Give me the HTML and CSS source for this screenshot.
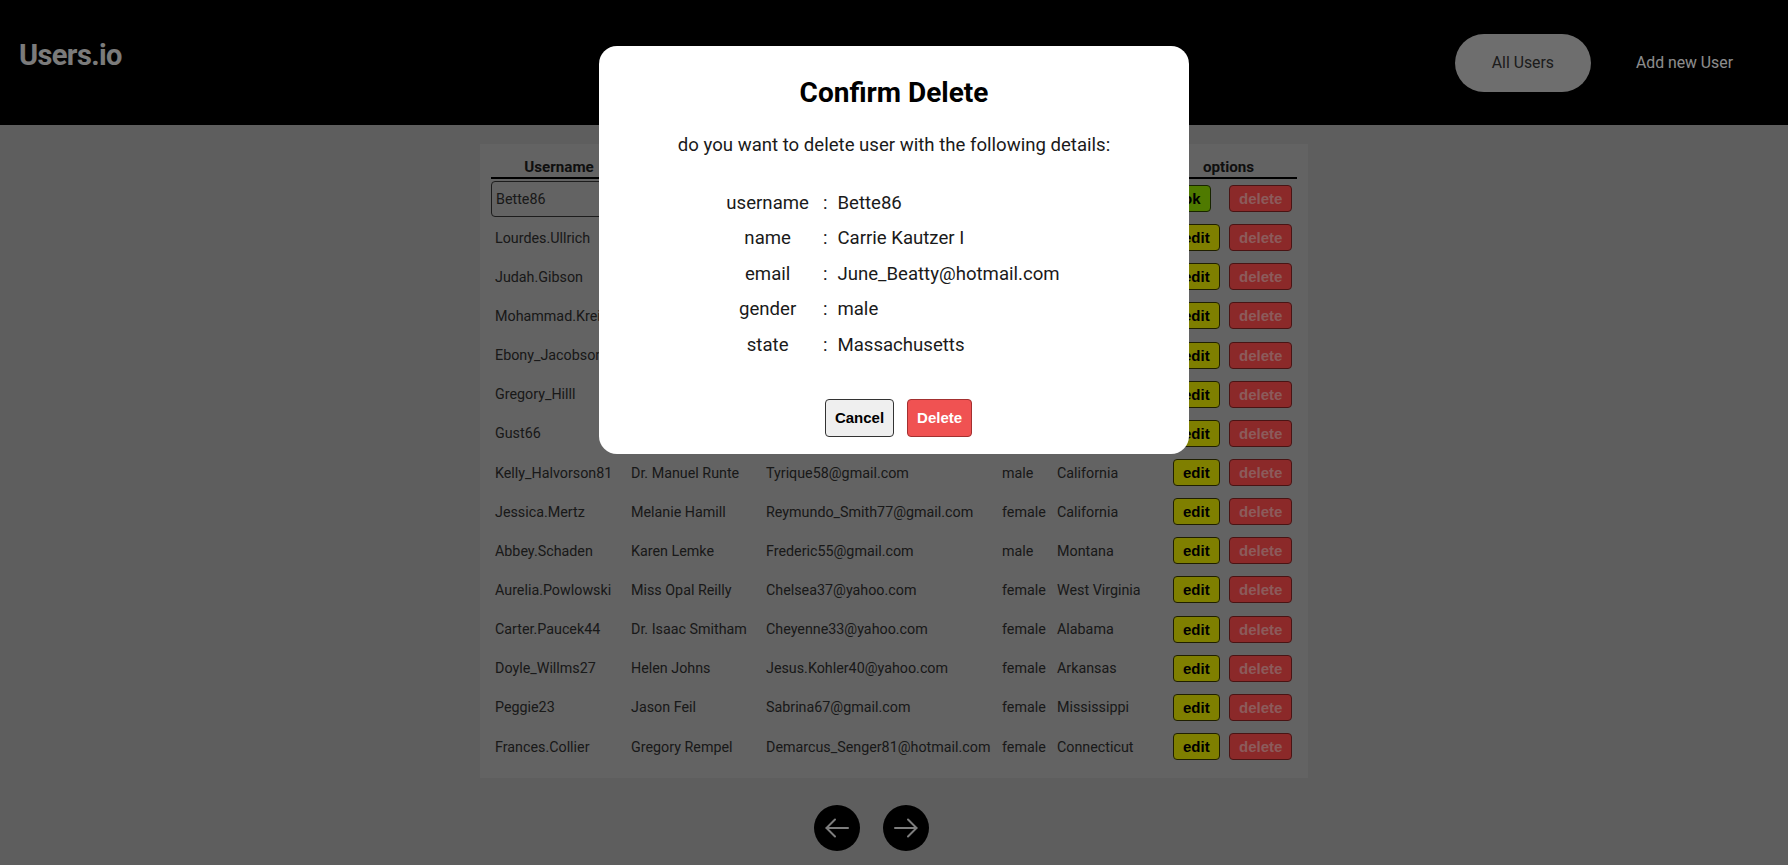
FILE: index.html
```html
<!DOCTYPE html>
<html lang="en">
<head>
<meta charset="utf-8">
<title>Users.io</title>
<link rel="stylesheet" href="styles.css">
</head>
<body>
<header class="topbar">
  <div class="logo">Users.io</div>
  <nav class="nav">
    <a class="nav-link active" href="#">All Users</a>
    <a class="nav-link" href="#">Add new User</a>
  </nav>
</header>

<main class="main">
  <section class="card">
    <div class="users">
      <div class="row head">
        <div class="th">Username</div>
        <div class="th"></div>
        <div class="th"></div>
        <div class="th"></div>
        <div class="th"></div>
        <div class="th th-opt">options</div>
      </div>

      <div class="row editing">
        <div class="cell cell-input"><input class="field" value="Bette86"></div>
        <div class="cell cell-input"><input class="field"></div>
        <div class="cell cell-input"><input class="field"></div>
        <div class="cell cell-input"><input class="field"></div>
        <div class="cell cell-input"><input class="field"></div>
        <div class="cell opts"><button class="btn btn-ok">ok</button><button class="btn btn-del">delete</button></div>
      </div>

      <div class="row"><div class="cell">Lourdes.Ullrich</div><div class="cell"></div><div class="cell"></div><div class="cell"></div><div class="cell"></div><div class="cell opts"><button class="btn btn-edit">edit</button><button class="btn btn-del">delete</button></div></div>
      <div class="row"><div class="cell">Judah.Gibson</div><div class="cell"></div><div class="cell"></div><div class="cell"></div><div class="cell"></div><div class="cell opts"><button class="btn btn-edit">edit</button><button class="btn btn-del">delete</button></div></div>
      <div class="row"><div class="cell">Mohammad.Kreiger</div><div class="cell"></div><div class="cell"></div><div class="cell"></div><div class="cell"></div><div class="cell opts"><button class="btn btn-edit">edit</button><button class="btn btn-del">delete</button></div></div>
      <div class="row"><div class="cell">Ebony_Jacobson</div><div class="cell"></div><div class="cell"></div><div class="cell"></div><div class="cell"></div><div class="cell opts"><button class="btn btn-edit">edit</button><button class="btn btn-del">delete</button></div></div>
      <div class="row"><div class="cell">Gregory_Hilll</div><div class="cell"></div><div class="cell"></div><div class="cell"></div><div class="cell"></div><div class="cell opts"><button class="btn btn-edit">edit</button><button class="btn btn-del">delete</button></div></div>
      <div class="row"><div class="cell">Gust66</div><div class="cell"></div><div class="cell"></div><div class="cell"></div><div class="cell"></div><div class="cell opts"><button class="btn btn-edit">edit</button><button class="btn btn-del">delete</button></div></div>
      <div class="row"><div class="cell">Kelly_Halvorson81</div><div class="cell">Dr. Manuel Runte</div><div class="cell">Tyrique58@gmail.com</div><div class="cell">male</div><div class="cell">California</div><div class="cell opts"><button class="btn btn-edit">edit</button><button class="btn btn-del">delete</button></div></div>
      <div class="row"><div class="cell">Jessica.Mertz</div><div class="cell">Melanie Hamill</div><div class="cell">Reymundo_Smith77@gmail.com</div><div class="cell">female</div><div class="cell">California</div><div class="cell opts"><button class="btn btn-edit">edit</button><button class="btn btn-del">delete</button></div></div>
      <div class="row"><div class="cell">Abbey.Schaden</div><div class="cell">Karen Lemke</div><div class="cell">Frederic55@gmail.com</div><div class="cell">male</div><div class="cell">Montana</div><div class="cell opts"><button class="btn btn-edit">edit</button><button class="btn btn-del">delete</button></div></div>
      <div class="row"><div class="cell">Aurelia.Powlowski</div><div class="cell">Miss Opal Reilly</div><div class="cell">Chelsea37@yahoo.com</div><div class="cell">female</div><div class="cell">West Virginia</div><div class="cell opts"><button class="btn btn-edit">edit</button><button class="btn btn-del">delete</button></div></div>
      <div class="row"><div class="cell">Carter.Paucek44</div><div class="cell">Dr. Isaac Smitham</div><div class="cell">Cheyenne33@yahoo.com</div><div class="cell">female</div><div class="cell">Alabama</div><div class="cell opts"><button class="btn btn-edit">edit</button><button class="btn btn-del">delete</button></div></div>
      <div class="row"><div class="cell">Doyle_Willms27</div><div class="cell">Helen Johns</div><div class="cell">Jesus.Kohler40@yahoo.com</div><div class="cell">female</div><div class="cell">Arkansas</div><div class="cell opts"><button class="btn btn-edit">edit</button><button class="btn btn-del">delete</button></div></div>
      <div class="row"><div class="cell">Peggie23</div><div class="cell">Jason Feil</div><div class="cell">Sabrina67@gmail.com</div><div class="cell">female</div><div class="cell">Mississippi</div><div class="cell opts"><button class="btn btn-edit">edit</button><button class="btn btn-del">delete</button></div></div>
      <div class="row"><div class="cell">Frances.Collier</div><div class="cell">Gregory Rempel</div><div class="cell">Demarcus_Senger81@hotmail.com</div><div class="cell">female</div><div class="cell">Connecticut</div><div class="cell opts"><button class="btn btn-edit">edit</button><button class="btn btn-del">delete</button></div></div>
    </div>
  </section>

  <div class="pager">
    <button class="pg" aria-label="previous page">
      <svg width="24" height="20" viewBox="0 0 24 20" fill="none" stroke="currentColor" stroke-width="2" stroke-linecap="round" stroke-linejoin="round"><path d="M23 10H1.5"/><path d="M10 1.5L1.5 10L10 18.5"/></svg>
    </button>
    <button class="pg" aria-label="next page">
      <svg width="24" height="20" viewBox="0 0 24 20" fill="none" stroke="currentColor" stroke-width="2" stroke-linecap="round" stroke-linejoin="round"><path d="M1 10H22.5"/><path d="M14 1.5L22.5 10L14 18.5"/></svg>
    </button>
  </div>
</main>

<div class="backdrop"></div>

<div class="modal" role="dialog">
  <h2 class="modal-title">Confirm Delete</h2>
  <p class="modal-text">do you want to delete user with the following details:</p>
  <div class="details">
    <div class="d-label">username</div><div class="d-colon">:</div><div class="d-value">Bette86</div>
    <div class="d-label">name</div><div class="d-colon">:</div><div class="d-value">Carrie Kautzer I</div>
    <div class="d-label">email</div><div class="d-colon">:</div><div class="d-value">June_Beatty@hotmail.com</div>
    <div class="d-label">gender</div><div class="d-colon">:</div><div class="d-value">male</div>
    <div class="d-label">state</div><div class="d-colon">:</div><div class="d-value">Massachusetts</div>
  </div>
  <div class="modal-actions">
    <button class="mbtn mbtn-cancel">Cancel</button>
    <button class="mbtn mbtn-delete">Delete</button>
  </div>
</div>
</body>
</html>
```
FILE: styles.css
```css
* { box-sizing: border-box; }

body {
  margin: 0;
  background: #ababab;
  font-family: Roboto, "Noto Sans", sans-serif;
  color: #2e2e2e;
}

/* header */
.topbar {
  height: 125px;
  background: #000;
  display: flex;
  justify-content: space-between;
  align-items: center;
  padding: 0 18px 0 19px;
}
.logo {
  align-self: flex-start;
  margin-top: 38px;
  font-size: 29px;
  line-height: 34px;
  font-weight: 700;
  letter-spacing: -0.6px;
  color: #e0e0e0;
}
.nav {
  display: flex;
  gap: 8px;
}
.nav-link {
  height: 58px;
  padding: 0 37px;
  border-radius: 29px;
  display: flex;
  align-items: center;
  font-size: 15.8px;
  color: #fff;
  text-decoration: none;
}
.nav-link.active {
  background: #c8c8c8;
  color: #333;
}

/* card + table */
.main { padding-top: 19px; }
.card {
  width: 828px;
  margin: 0 auto;
  background: #b4b4b4;
  padding: 13px 11px 12px;
}
.row {
  display: grid;
  grid-template-columns: 136px 135px 236px 55px 116px 128px;
  align-items: center;
  height: 39.15px;
}
.row.head {
  height: 22px;
  align-items: start;
  border-bottom: 2px solid #000;
}
.th {
  font-size: 15.2px;
  line-height: 20px;
  font-weight: 700;
  color: #1c1c1c;
  text-align: center;
  white-space: nowrap;
}
.th-opt { padding-right: 9px; }
.cell {
  padding-left: 4px;
  font-size: 14.3px;
  white-space: nowrap;
  overflow: hidden;
}
.cell-input { padding-left: 0; padding-right: 4px; }
.field {
  display: block;
  width: 100%;
  height: 36px;
  border: 1px solid #333;
  border-radius: 4px;
  background: transparent;
  padding: 0 4px;
  font: 14.3px Roboto, "Noto Sans", sans-serif;
  color: #2e2e2e;
}
.opts {
  display: grid;
  grid-template-columns: 46px 64px;
  column-gap: 10px;
  justify-items: start;
  overflow: visible;
}
.btn {
  height: 27px;
  padding: 0 9px;
  border: 1px solid #333;
  border-radius: 4px;
  font: 700 15px "Liberation Sans", Arial, sans-serif;
  line-height: 25px;
  color: #000;
  cursor: pointer;
}
.btn-edit { background: #e7e700; border-color: #3a3a00; }
.btn-ok { background: #90de00; border-color: #2c4400; }
.btn-del { background: #fd4c4c; border-color: #862626; color: #ffa6a6; }

/* pager */
.pager {
  display: flex;
  justify-content: center;
  gap: 23px;
  margin-top: 27px;
  padding-right: 45px;
}
.pg {
  width: 46px;
  height: 46px;
  border-radius: 50%;
  border: none;
  background: #000;
  color: #e4e4e4;
  display: flex;
  align-items: center;
  justify-content: center;
  padding: 0;
}

/* modal */
.backdrop {
  position: fixed;
  inset: 0;
  background: rgba(0, 0, 0, 0.45);
}
.modal {
  position: fixed;
  top: 46px;
  left: 50%;
  transform: translateX(-50%);
  width: 590px;
  background: #fff;
  border-radius: 18px;
  padding: 30px 0 17px;
  text-align: center;
  color: #1a1a1a;
}
.modal-title {
  margin: 0;
  font-size: 28px;
  line-height: 34px;
  font-weight: 700;
  color: #000;
}
.modal-text {
  margin: 23px 0 0;
  font-size: 18.6px;
  line-height: 24px;
}
.details {
  display: grid;
  grid-template-columns: auto auto auto;
  justify-content: center;
  margin-top: 28.5px;
  font-size: 18.6px;
  line-height: 35.5px;
}
.d-label { padding: 0 12px; text-align: center; }
.d-colon { padding: 0 10px 0 2px; }
.d-value { padding: 0 14px 0 0; text-align: left; }
.modal-actions {
  display: flex;
  justify-content: center;
  gap: 13px;
  margin-top: 35.5px;
  padding-left: 9px;
}
.mbtn {
  height: 38px;
  padding: 0 9px;
  border-radius: 4px;
  font: 700 15px "Liberation Sans", Arial, sans-serif;
  cursor: pointer;
}
.mbtn-cancel { background: #efefef; border: 1px solid #333; color: #000; }
.mbtn-delete { background: #f05252; border: 1px solid #a33030; color: #fff; }
```
